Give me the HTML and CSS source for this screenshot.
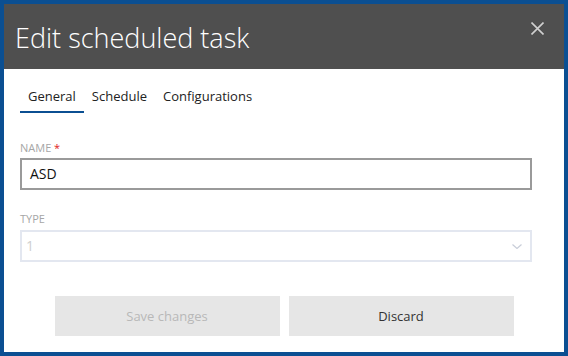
FILE: index.html
```html
<!DOCTYPE html>
<html>
<head>
<meta charset="utf-8">
<link rel="stylesheet" href="styles.css">
</head>
<body>
<div class="dialog">
  <div class="header">
    <h1 class="title">Edit scheduled task</h1>
    <button class="close" aria-label="Close">
      <svg width="13" height="13" viewBox="0 0 13 13"><path d="M0.5 0.5L12.5 12.5M12.5 0.5L0.5 12.5" stroke="#d0d0d0" stroke-width="1.6" fill="none"/></svg>
    </button>
  </div>
  <div class="content">
    <div class="tabs">
      <div class="tab active">General</div>
      <div class="tab">Schedule</div>
      <div class="tab">Configurations</div>
    </div>
    <div class="field field-name">
      <label class="label">NAME <span class="req">*</span></label>
      <div class="input">ASD</div>
    </div>
    <div class="field field-type">
      <label class="label">TYPE</label>
      <div class="select disabled">
        <span>1</span>
        <svg width="10" height="5" viewBox="0 0 10 5"><path d="M0.5 0.5L5 4.5L9.5 0.5" stroke="#c9ced9" stroke-width="1.2" fill="none"/></svg>
      </div>
    </div>
    <div class="actions">
      <button class="btn disabled">Save changes</button>
      <button class="btn">Discard</button>
    </div>
  </div>
</div>
</body>
</html>
```
FILE: styles.css
```css
html, body {
  margin: 0;
  padding: 0;
}
body {
  width: 568px;
  height: 356px;
  font-family: "Open Sans", "Noto Sans", sans-serif;
}
.dialog {
  box-sizing: border-box;
  width: 568px;
  height: 356px;
  border: 4px solid #0b4f92;
  background: #fff;
  display: flex;
  flex-direction: column;
}
.header {
  height: 65px;
  background: #4f4f4f;
  display: flex;
  align-items: flex-start;
  justify-content: space-between;
  padding: 0 20px 0 11px;
}
.title {
  margin: 16px 0 0 0;
  font-weight: 300;
  font-size: 27px;
  line-height: 36px;
  color: #fff;
}
.close {
  margin-top: 18px;
  padding: 0;
  border: 0;
  background: none;
  width: 13px;
  height: 13px;
  display: block;
}
.close svg { display: block; }
.content {
  padding: 14px 32px 0 16px;
  display: flex;
  flex-direction: column;
}
.tabs {
  display: flex;
}
.tab {
  padding: 4px 8px 6px;
  font-size: 13px;
  line-height: 18px;
  color: #222;
  border-bottom: 2px solid transparent;
}
.tab.active {
  border-bottom-color: #0b4f92;
}
.field {
  display: flex;
  flex-direction: column;
}
.field-name { margin-top: 28px; }
.field-type { margin-top: 22px; }
.label {
  font-size: 11px;
  line-height: 14px;
  color: #a6a6a6;
  margin-bottom: 3px;
}
.req { color: #e02020; }
.input {
  box-sizing: border-box;
  height: 32px;
  border: 2px solid #9a9a9a;
  padding: 0 8px;
  font-size: 14px;
  line-height: 28px;
  color: #111;
}
.select {
  box-sizing: border-box;
  margin-top: 1px;
  height: 32px;
  border: 2px solid #e3e7f0;
  padding: 0 8px 0 4px;
  font-size: 14px;
  line-height: 28px;
  color: #cfcfcf;
  display: flex;
  align-items: center;
  justify-content: space-between;
}
.actions {
  display: flex;
  justify-content: center;
  gap: 9px;
  margin-top: 34px;
  padding-left: 16px;
}
.btn {
  width: 225px;
  height: 40px;
  border: 0;
  background: #e6e6e6;
  font-family: "Open Sans", "Noto Sans", sans-serif;
  font-size: 13px;
  color: #333;
}
.btn.disabled {
  color: #b8b8b8;
}
```
